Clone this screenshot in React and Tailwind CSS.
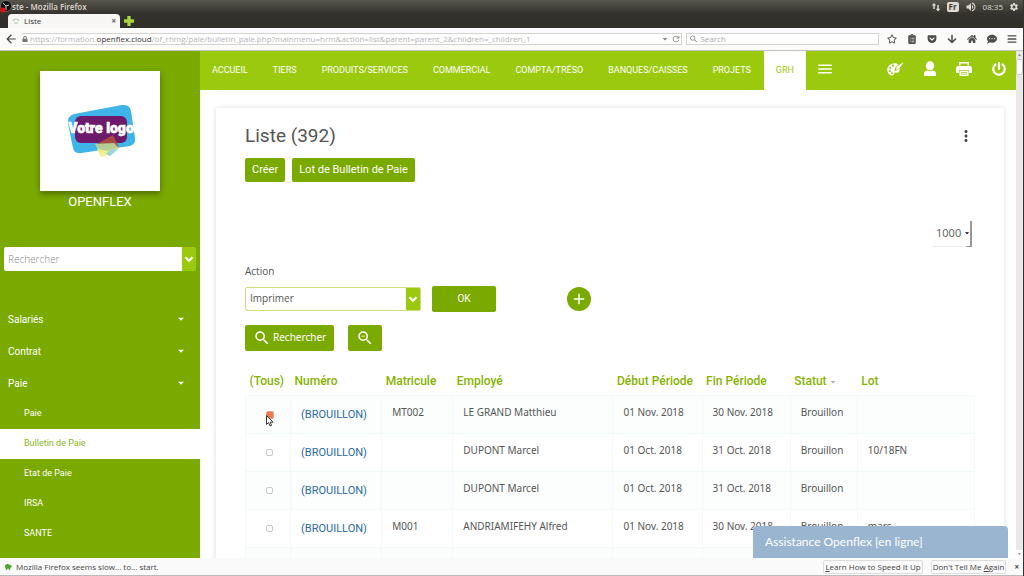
import React, { useState } from 'react';
import { FaRegStar, FaClipboardList, FaGetPocket, FaArrowDown, FaHome, FaCommentDots, FaBars, FaLock, FaPowerOff } from 'react-icons/fa';
import { MdSearch, MdZoomOut, MdMoreVert, MdAdd, MdMenu, MdArrowBack, MdRefresh, MdVolumeUp, MdSettings, MdArrowDropDown } from 'react-icons/md';

const NAV_ITEMS = [
  'ACCUEIL',
  'TIERS',
  'PRODUITS/SERVICES',
  'COMMERCIAL',
  'COMPTA/TRÉSO',
  'BANQUES/CAISSES',
  'PROJETS',
  'GRH',
];

const MENU = ['Salariés', 'Contrat', 'Paie'];
const SUBMENU = ['Paie', 'Bulletin de Paie', 'Etat de Paie', 'IRSA', 'SANTE'];

const BULLETINS = [
  { id: 1, matricule: 'MT002', employe: 'LE GRAND Matthieu', debut: '01 Nov. 2018', fin: '30 Nov. 2018', lot: '' },
  { id: 2, matricule: '', employe: 'DUPONT Marcel', debut: '01 Oct. 2018', fin: '31 Oct. 2018', lot: '10/18FN' },
  { id: 3, matricule: '', employe: 'DUPONT Marcel', debut: '01 Oct. 2018', fin: '31 Oct. 2018', lot: '' },
  { id: 4, matricule: 'M001', employe: 'ANDRIAMIFEHY Alfred', debut: '01 Nov. 2018', fin: '30 Nov. 2018', lot: 'mars' },
  { id: 5, matricule: '', employe: '', debut: '', fin: '', lot: '' },
];

const Chevron = () => (
  <svg viewBox="0 0 10 10" className="w-2.5 h-2.5" fill="none" stroke="#fff" strokeWidth="2">
    <path d="M1.5 3.2 5 6.8l3.5-3.6" />
  </svg>
);

const Logo = () => (
  <svg viewBox="0 0 120 120" className="w-full h-full">
    <path d="M34 43 82 34q8-1 9 6l4 27q1 6-5 8L41 82q-7 1-8-5l-5-24q-1-8 6-10z" fill="#3fb4e8" />
    <rect x="35" y="45" width="52" height="27" rx="6" fill="#6d1a6b" />
    <path d="m66 80-11-6 18-10 6 12z" fill="#b0503a" opacity=".85" />
    <path d="m55 73 19-1 5 5-9 8-8-4-1 4z" fill="#b9d79a" opacity=".9" />
    <path d="m57 78 12 2-3 5-5 1z" fill="#eef08a" opacity=".9" />
    <path d="m66 83 4 2 8-7-8 1z" fill="#8fd3ee" opacity=".8" />
    <text x="61" y="62" textAnchor="middle" fontFamily="Roboto" fontWeight="900" fontSize="14" fill="#fff" stroke="#fff" strokeWidth="0.6">Votre logo</text>
  </svg>
);

const BrowserChrome = () => (
  <header className="shrink-0 font-['Open_Sans',sans-serif]">
    <div className="h-7 bg-linear-to-b from-[#57564c] via-[#34322c] via-50% to-[#302e2a] flex flex-col justify-between">
      <div className="h-3.5 flex items-center justify-between pr-1 text-[#dfdbd2] text-[8px]">
        <div className="flex items-center">
          <svg viewBox="0 0 12 14" className="w-3 h-3.5">
            <circle cx="6" cy="6" r="5.5" fill="#111" stroke="#888" strokeWidth=".6" />
            <path d="M6 6 3 3M6 6l3-1M6 6v4" stroke="#ccc" strokeWidth="1" />
            <circle cx="3" cy="10" r="2.6" fill="#e01010" />
          </svg>
          <span className="font-semibold">ste - Mozilla Firefox</span>
        </div>
        <div className="flex items-center gap-1.5">
          <svg viewBox="0 0 10 10" className="w-2.5 h-2.5" fill="#dfdbd2">
            <path d="M3 1 .8 3.500h1.500V7h1.500V3.500h1.400zM7 9.500l2.300-2.700H7.800V3H6.300v3.800H4.800z" />
          </svg>
          <span className="bg-[#dfdbd2] text-[#3c3b37] font-bold rounded-xs px-0.5 leading-[10px]">Fr</span>
          <MdVolumeUp className="w-3 h-3" />
          <span>08:35</span>
          <MdSettings className="w-2.5 h-2.5" />
        </div>
      </div>
      <div className="h-3.5 pl-2 flex items-center">
        <div className="w-28 h-full bg-[#f7f6f5] rounded-t flex items-center px-1 text-[8px] text-[#333]">
          <svg viewBox="0 0 8 8" className="w-2 h-2" fill="none" stroke="#9cc9a5">
            <path d="M1 4a3 2 0 0 1 6 0M2 6h4" />
          </svg>
          <span className="flex-1 pl-1">Liste</span>
          <span className="font-bold text-[#555]">×</span>
        </div>
        <svg viewBox="0 0 9 9" className="w-2.5 h-2.5 ml-1">
          <path d="M3 0h3v3h3v3H6v3H3V6H0V3h3z" fill="#a8d63c" />
        </svg>
      </div>
    </div>
    <div className="h-[23px] bg-[#fbfbfa] border-b border-[#c4c2be] flex items-center gap-1 pl-1 pr-1.5 text-[8px] text-[#b5b5b5]">
      <button type="button" aria-label="Retour" className="w-3.5 text-[#444]"><MdArrowBack className="w-3.5 h-3.5" /></button>
      <div className="flex-1 h-3 flex items-center border-y border-r border-[#d5d3d0] bg-white">
        <FaLock className="w-1.5 h-1.5 text-[#777] mr-0.5" />
        <span className="flex-1 whitespace-nowrap">
          https://formation.<span className="text-[#333]">openflex.cloud</span>/of_rhmg/paie/bulletin_paie.php?mainmenu=hrm&amp;action=list&amp;parent=parent_2&amp;children=_children_1
        </span>
        <MdArrowDropDown className="w-3 h-3 text-[#888]" />
        <MdRefresh className="w-2.5 h-2.5 text-[#888]" />
      </div>
      <label className="w-[193px] h-3 flex items-center border border-[#d5d3d0] bg-white px-0.5">
        <MdSearch className="w-2.5 h-2.5 text-[#888]" />
        <input type="search" aria-label="Search" placeholder="Search" className="w-full pl-0.5 outline-none placeholder:text-[#aaa]" />
      </label>
      <div className="w-[134px] flex items-center justify-between pl-1 text-[#4c4c4c] [&>svg]:w-2.5 [&>svg]:h-2.5">
        <FaRegStar />
        <FaClipboardList />
        <FaGetPocket />
        <FaArrowDown />
        <FaHome />
        <FaCommentDots />
        <FaBars />
      </div>
    </div>
  </header>
);

const Sidebar = () => (
  <aside className="w-[200px] shrink-0 bg-[#7aa900] text-white overflow-hidden">
    <div className="w-[120px] h-[120px] mt-5 mx-auto bg-white shadow-[0_3px_6px_rgba(0,0,0,0.35)]">
      <Logo />
    </div>
    <p className="text-center text-[13px] leading-[22px]">OPENFLEX</p>
    <div className="mt-[34px] mx-1 h-6 flex rounded-xs overflow-hidden">
      <input type="text" aria-label="Rechercher" placeholder="Rechercher" className="flex-1 min-w-0 bg-white px-1 text-[10px] font-['Open_Sans',sans-serif] font-light placeholder:text-[#888] outline-none" />
      <button type="button" aria-label="Ouvrir" className="w-3.5 bg-[#9bc90e] flex items-center justify-center"><Chevron /></button>
    </div>
    <nav className="mt-8">
      {MENU.map((item) => (
        <a key={item} href="#" className="h-8 pl-2 pr-3 flex items-center justify-between text-[10px]">
          {item}
          <MdArrowDropDown className="w-3.5 h-3.5" />
        </a>
      ))}
      {SUBMENU.map((item) => (
        <a
          key={item}
          href="#"
          className={`h-[30px] pl-6 flex items-center text-[9px] ${item === 'Bulletin de Paie' ? 'bg-white text-[#8ab61c]' : ''}`}
        >
          {item}
        </a>
      ))}
    </nav>
  </aside>
);

const TopNav = () => (
  <nav className="h-[39px] bg-[#9bc90e] text-white flex items-stretch">
    <div className="flex gap-px text-[9px]">
      {NAV_ITEMS.map((item) => (
        <a
          key={item}
          href="#"
          className={`px-3 flex items-center whitespace-nowrap ${item === 'GRH' ? 'bg-white text-[#9bc90e]' : ''}`}
        >
          {item}
        </a>
      ))}
    </div>
    <button type="button" aria-label="Menu" className="ml-2.5"><MdMenu className="w-[18px] h-[18px] -mt-1" /></button>
    <div className="ml-auto pr-2.5 pb-1 flex items-center gap-5">
      <svg viewBox="0 0 17 14" className="w-[17px] h-3.5" fill="#fff">
        <path d="M8.500 1.200C4 .8.300 4 .3 7.500c0 3.500 2.300 5.900 4.600 5.900 2 0 1.600-1.700 2.600-2.500 1-.7 3 .3 4.300-1 .9-1 1-2.400.6-3.600l-2.300 2L7.500 9l.5-2.800 3-3.900q-1.200-1-2.500-1.100z" />
        <path d="M16.800.2 10 4.300 8.800 7.800l3.400-1.400z" />
        <g fill="#9bc90e">
          <circle cx="3.200" cy="6" r="1.100" />
          <circle cx="6" cy="3.600" r="1.100" />
          <circle cx="2.900" cy="9" r="1.100" />
          <circle cx="5" cy="11.200" r="1" />
        </g>
      </svg>
      <svg viewBox="0 0 12 15" className="w-3 h-[15px]" fill="#fff">
        <ellipse cx="6" cy="4.700" rx="4.200" ry="4.500" />
        <path d="M0 15v-2.500C0 10.500 2 9.400 3.600 9.400c1.400 1 3.400 1 4.800 0 1.600 0 3.600 1.100 3.600 3.100V15z" />
      </svg>
      <svg viewBox="0 0 16 14" className="w-4 h-3.5" fill="#fff">
        <path d="M3 0h10v3.500h-1.500v-2h-7v2H3z" />
        <path d="M2 4h12q2 0 2 2v5h-3V8H3v3H0V6q0-2 2-2z" />
        <path d="M3.500 8.700h9V14h-9zM5 10v.8h6V10zm0 1.800v.8h6v-.8z" fillRule="evenodd" />
      </svg>
      <FaPowerOff className="w-3.5 h-3.5" />
    </div>
  </nav>
);

const Th = ({ children }) => (
  <th className="h-[29px] pl-1 text-left text-xs font-medium text-[#86b300] whitespace-nowrap">{children}</th>
);

const Td = ({ children }) => (
  <td className="h-[38px] pl-2.5 pb-1 border border-[#f3fafc] whitespace-nowrap">{children}</td>
);

const BulletinTable = ({ selected, onToggle }) => (
  <table className="mt-4 w-full table-fixed border-collapse text-[10px] text-[#555]">
    <colgroup>
      <col className="w-[45px]" />
      <col className="w-[91px]" />
      <col className="w-[71px]" />
      <col className="w-[160px]" />
      <col className="w-[89px]" />
      <col className="w-[88px]" />
      <col className="w-[67px]" />
      <col className="w-[117px]" />
    </colgroup>
    <thead>
      <tr>
        <Th>(Tous)</Th>
        <Th>Numéro</Th>
        <Th>Matricule</Th>
        <Th>Employé</Th>
        <Th>Début Période</Th>
        <Th>Fin Période</Th>
        <Th>Statut<MdArrowDropDown className="inline w-3 h-3 text-[#b0b0b0]" /></Th>
        <Th>Lot</Th>
      </tr>
    </thead>
    <tbody className="font-['Noto_Sans',sans-serif]">
      {BULLETINS.map((row) => (
        <tr key={row.id} className="odd:bg-[#fcfefe]">
          <td className="h-[38px] pl-1 border border-[#f3fafc]">
            {row.employe && (
              <div className="relative w-2 h-2 mx-auto flex">
                <input
                  type="checkbox"
                  aria-label={`Bulletin ${row.id}`}
                  checked={selected.includes(row.id)}
                  onChange={() => onToggle(row.id)}
                  className="appearance-none w-[7px] h-[7px] border border-[#c8c8c8] bg-white rounded-xs checked:w-2 checked:h-2 checked:bg-[#ee7b50] checked:border-[#f2a285]"
                />
                {row.id === 1 && (
                  <svg viewBox="0 0 8 12" className="absolute left-0 top-1 w-2 h-3 pointer-events-none">
                    <path d="M.5.5v9l2.100-2L4 11l1.600-.7-1.400-3.200h2.900z" fill="#fff" stroke="#222" strokeWidth=".9" />
                  </svg>
                )}
              </div>
            )}
          </td>
          <td className="h-[38px] pl-2.5 border border-[#f3fafc] text-[11px] font-[Roboto,sans-serif]">
            {row.employe && <a href="#" className="text-[#2a6a9f]">(BROUILLON)</a>}
          </td>
          <Td>{row.matricule}</Td>
          <Td>{row.employe}</Td>
          <Td>{row.debut}</Td>
          <Td>{row.fin}</Td>
          <Td>{row.employe && 'Brouillon'}</Td>
          <Td>{row.lot}</Td>
        </tr>
      ))}
    </tbody>
  </table>
);

const App = () => {
  const [selected, setSelected] = useState([1]);
  const [action, setAction] = useState('Imprimer');
  const [limit, setLimit] = useState('1000');

  const toggle = (id) => {
    setSelected(selected.includes(id) ? selected.filter((s) => s !== id) : [...selected, id]);
  };

  return (
    <div className="h-screen flex flex-col overflow-hidden bg-white border-r border-[#333] font-[Roboto,sans-serif]">
      <BrowserChrome />

      <div className="relative flex-1 min-h-0 flex">
        <Sidebar />
        <div className="flex-1 min-w-0 overflow-hidden">
          <TopNav />
          <main className="mt-[18px] ml-4 mr-3 px-[29px] pt-4 pb-10 bg-white shadow-[0_0_5px_rgba(0,0,0,0.14)]">
            <div className="flex items-center justify-between">
              <h1 className="text-[19px] leading-6 text-[#555]">Liste (392)</h1>
              <button type="button" aria-label="Options" className="text-[#444]"><MdMoreVert className="w-[18px] h-[18px]" /></button>
            </div>
            <div className="mt-2.5 flex gap-[7px] text-[11px] text-white">
              <button type="button" className="h-6 px-[7px] rounded-xs bg-[#7aa900]">Créer</button>
              <button type="button" className="h-6 px-[7px] rounded-xs bg-[#7aa900]">Lot de Bulletin de Paie</button>
            </div>

            <div className="mt-[38px] flex justify-end pr-[3px]">
              <div className="relative">
                <select
                  aria-label="Nombre de lignes"
                  value={limit}
                  onChange={(e) => setLimit(e.target.value)}
                  className="appearance-none h-[26px] w-10 pl-1 text-[11px] text-[#666] font-['Noto_Sans',sans-serif] border-r-2 border-b border-r-[#999] border-b-[#eee]"
                >
                  <option>1000</option>
                  <option>500</option>
                </select>
                <MdArrowDropDown className="absolute right-0 top-2 w-2.5 h-2.5 pointer-events-none" />
                <span className="absolute right-0 bottom-0 w-1.5 h-px bg-[#999]" />
              </div>
            </div>

            <label htmlFor="action" className="block mt-4 text-[10px] leading-4 text-[#555] font-['Open_Sans',sans-serif]">Action</label>
            <div className="mt-[7px] flex items-center">
              <div className="w-[176px] h-6 flex rounded-xs border border-[#c9e07c] overflow-hidden">
                <select
                  id="action"
                  value={action}
                  onChange={(e) => setAction(e.target.value)}
                  className="appearance-none flex-1 px-1 text-[10px] text-[#555] font-['Open_Sans',sans-serif]"
                >
                  <option>Imprimer</option>
                  <option>Valider</option>
                </select>
                <span className="w-3.5 bg-[#9bc90e] flex items-center justify-center"><Chevron /></span>
              </div>
              <button type="button" className="ml-[11px] w-16 h-[26px] rounded-xs bg-[#7aa900] text-white text-[10px]">OK</button>
              <button type="button" aria-label="Ajouter" className="ml-[71px] w-6 h-6 rounded-full bg-[#7aa900] text-white flex items-center justify-center">
                <MdAdd className="w-[18px] h-[18px]" />
              </button>
            </div>

            <div className="mt-[13px] flex gap-3.5 text-white">
              <button type="button" className="h-[26px] px-2 rounded-xs bg-[#7aa900] flex items-center gap-0.5 text-[10px] font-['Noto_Sans',sans-serif]">
                <MdSearch className="w-[18px] h-[18px]" />
                Rechercher
              </button>
              <button type="button" aria-label="Effacer la recherche" className="h-[26px] px-2 rounded-xs bg-[#7aa900]">
                <MdZoomOut className="w-[18px] h-[18px]" />
              </button>
            </div>

            <BulletinTable selected={selected} onToggle={toggle} />
          </main>
        </div>

        <div className="w-[7px] shrink-0 bg-[#ebe9e7] flex flex-col items-center justify-between text-[#888]">
          <div className="w-full">
            <svg viewBox="0 0 7 8" className="w-[7px] h-2"><path d="m2 5 1.500-2L5 5z" fill="currentColor" /></svg>
            <div className="w-full h-4 bg-white border border-[#ccc] rounded-xs" />
          </div>
          <svg viewBox="0 0 7 8" className="w-[7px] h-2 bg-white"><path d="m2 3 1.500 2L5 3z" fill="currentColor" /></svg>
        </div>

        <button type="button" className="absolute right-[15px] bottom-0 w-[255px] h-8 pl-3 rounded-t-sm bg-[#9ab5cf] text-white text-xs text-left font-[Lato,sans-serif]">
          Assistance Openflex [en ligne]
        </button>
      </div>

      <footer className="h-[18px] shrink-0 px-1 flex items-center bg-[#fafafa] border-b border-[#bbb] text-[8px] text-[#444] font-['Open_Sans',sans-serif]">
        <svg viewBox="0 0 9 8" className="w-2 h-2 mr-1">
          <path d="M1 4a3 3 0 0 1 5-2.500A2 2 0 0 1 8.500 4L7 5v2.500H5.500V6h-2v1.500H2V5.500z" fill="#4fa52c" />
        </svg>
        <span className="flex-1">Mozilla Firefox seems slow... to... start.</span>
        <button type="button" className="px-px border border-[#ddd] rounded-xs"><u>L</u>earn How to Speed It Up</button>
        <button type="button" className="ml-2 px-px border border-[#ddd] rounded-xs">Don't Tell Me <u>A</u>gain</button>
        <button type="button" aria-label="Fermer" className="ml-2 font-bold">×</button>
      </footer>
    </div>
  );
};

export default App;
